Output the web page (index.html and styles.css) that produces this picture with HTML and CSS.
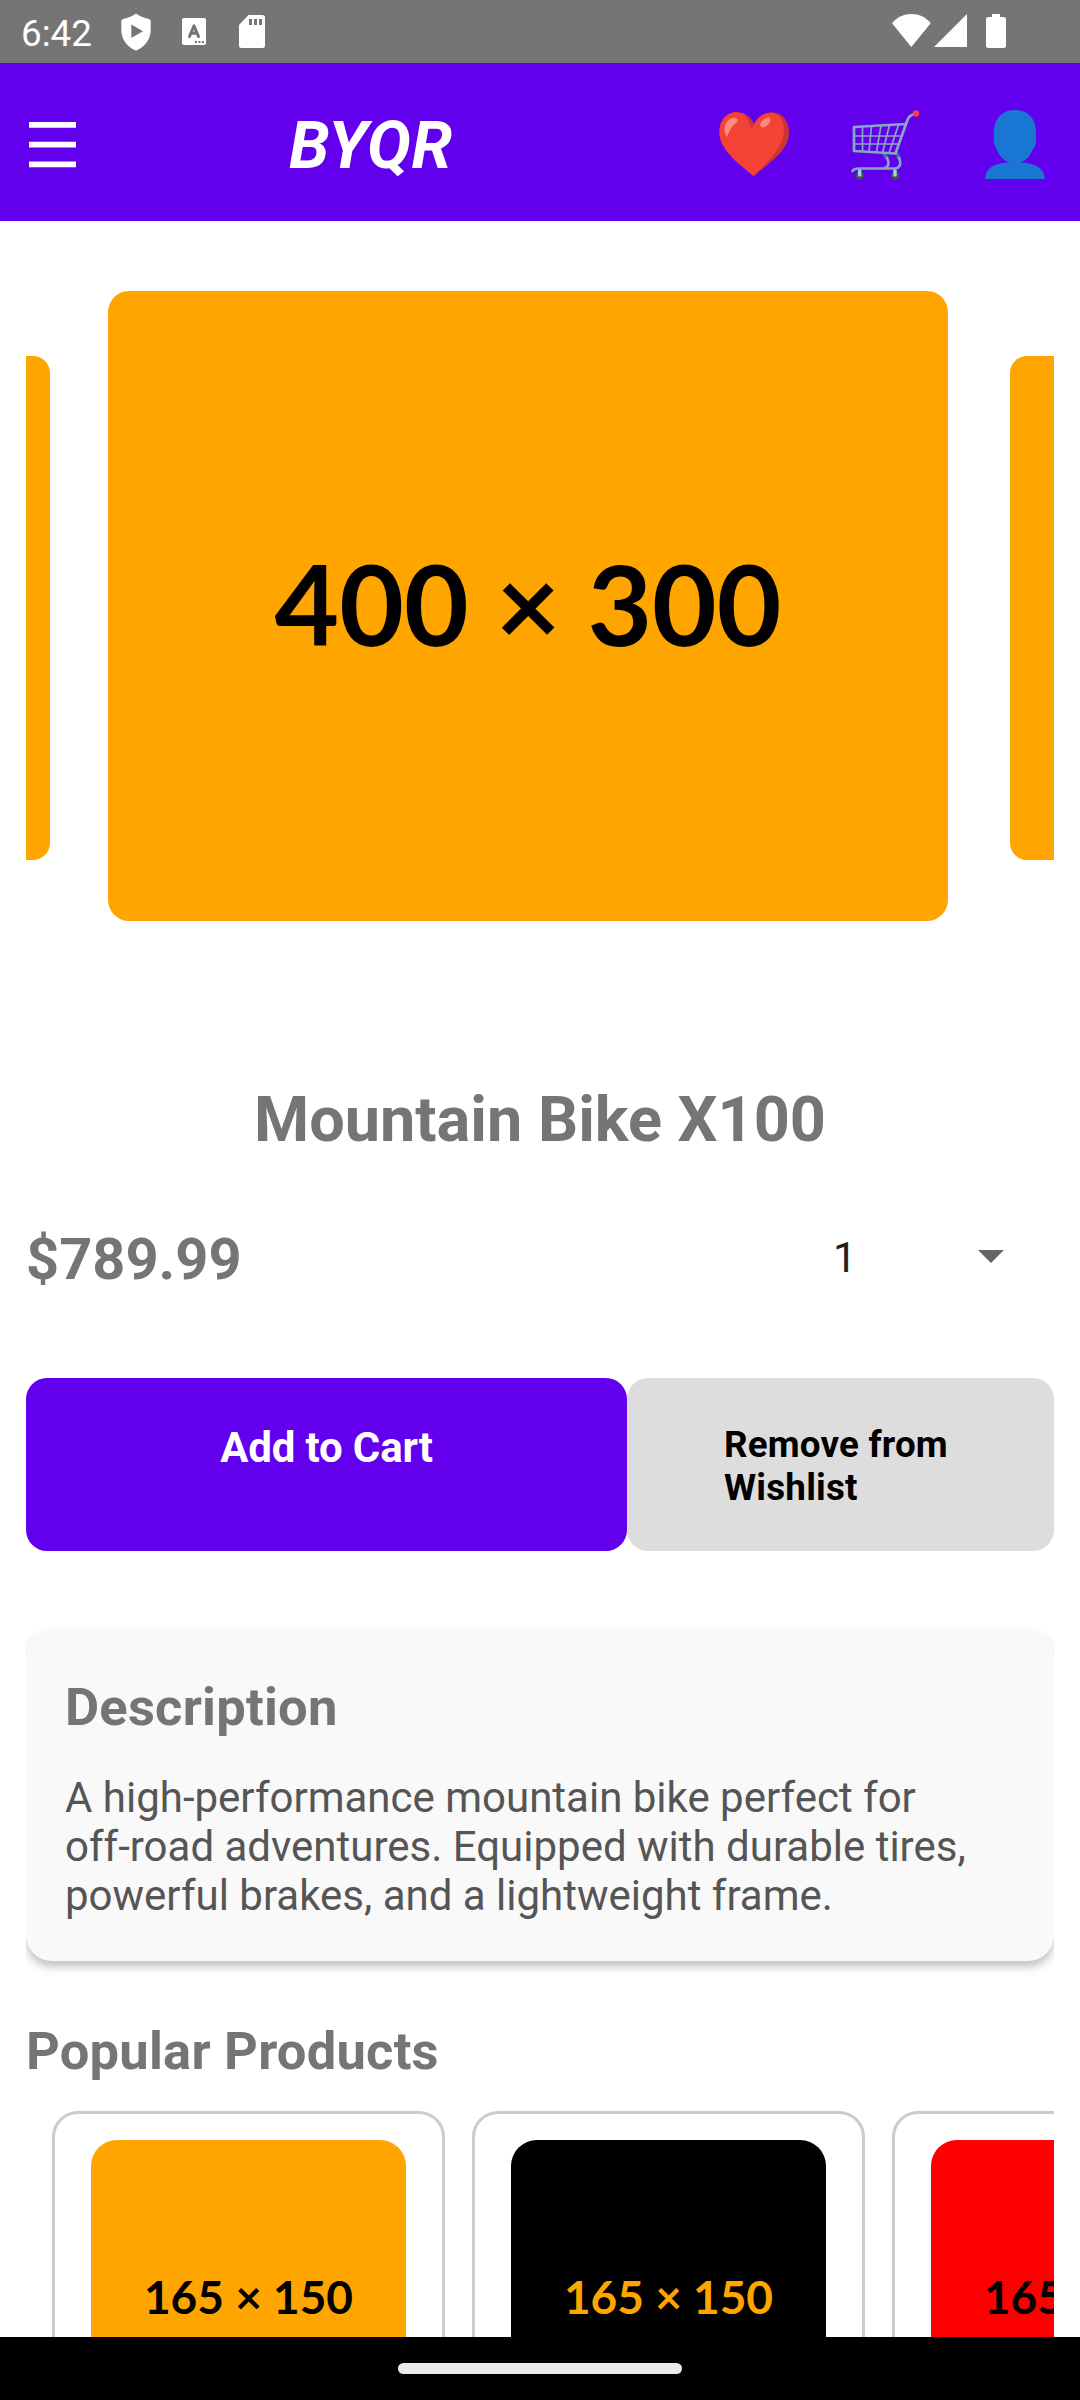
FILE: index.html
```html
<!DOCTYPE html>
<html lang="en">
<head>
<meta charset="utf-8">
<title>BYQR</title>
<link rel="stylesheet" href="styles.css">
</head>
<body>
<div class="screen">
  <div class="status">
    <span class="time">6:42</span>
    <svg class="shield" width="30" height="38" viewBox="0 0 30 38"><path fill="#fff" fill-rule="evenodd" d="M15 0.5C11.500 3.500 5.500 5 2 6Q0.300 6.700 0.300 8.500V17C0.300 27 7 34.500 15 37.500C23 34.500 29.700 27 29.700 17V8.500Q29.700 6.700 28 6C24.500 5 18.500 3.500 15 0.500ZM10.300 11.500V25L22 18.300Z"/></svg>
    <svg class="lang" width="24" height="27" viewBox="0 0 24 27"><rect width="24" height="27" rx="2" fill="#fff"/><path fill="none" stroke="#757575" stroke-width="3" stroke-linecap="round" stroke-linejoin="round" d="M7.500 18.500L12 7.800L16.500 18.500M9 15.300H15"/><path fill="#757575" d="M13 23h2v2h-2zM16.500 23h2v2h-2zM20 23h2v2h-2z"/></svg>
    <svg class="sd" width="26" height="33" viewBox="0 0 26 33"><path fill="#fff" fill-rule="evenodd" d="M9.500 0H23.500Q26 0 26 2.500V30.500Q26 33 23.500 33H2.500Q0 33 0 30.500V10ZM10 4V10H13V4ZM15 4V10H18V4ZM20 4V10H23V4Z"/></svg>
    <svg class="signals" width="115" height="34" viewBox="0 0 115 34"><g fill="#fff"><path d="M0 9.200C10 -3 29 -3 38.700 9.200L19.300 33Z"/><path d="M42 33L75 0V33Z"/><path d="M100 0h8v3h3.500q2.500 0 2.500 2.500v26q0 2.500-2.500 2.500h-15q-2.500 0-2.500-2.500v-26q0-2.500 2.500-2.500h3.500z"/></g></svg>
  </div>
  <header class="header">
    <svg class="menu" width="47" height="46" viewBox="0 0 47 46"><path fill="#fff" d="M0 0h47v5.700H0zM0 19.800h47v5.700H0zM0 39.500h47v5.700H0z"/></svg>
    <h1 class="brand">BYQR</h1>
    <svg class="heart" width="70" height="65" viewBox="0 0 70 65"><path fill="#c33" d="M35 17C40 3 48 0.300 53 0.300C63 0.300 70 9 70 20C70 39 51 50 35 64C28 57 0.500 40 0.500 20C0.500 8 8 0.300 17 0.300C26 0.300 32 5 35 17Z"/><path fill="#f44336" d="M35 12.500C38 5 44 1 51 0.800C60 1 65.500 8 65 19C64 38 44 54 34.500 64C26 56 0.300 40 0.300 20C0.300 8 8 0.300 17 0.300C24 0.300 31 3.500 35 12.500Z"/><path fill="#c33" d="M24 1.800C29 3 33 7 35 12.500L32.500 17C31 11 28.500 5 24 1.800Z"/><g fill="#ff8a80"><path d="M8 25C4 19 5 10 11 7C16 4 21 7 17 11C12 15 11 18 8 25Z"/><ellipse cx="46.300" cy="10.500" rx="6.200" ry="3.500" transform="rotate(-43 46.300 10.500)"/></g></svg>
    <svg class="cart" width="69" height="70" viewBox="0 0 69 70"><g fill="none" stroke="#84a8bf" stroke-linecap="round" stroke-linejoin="round"><path stroke="#317b91" stroke-width="3.500" d="M33 44L36 48M46 44L48 48"/><path stroke-width="2.700" d="M64 4C58 5 57 8 55 14L44.500 43.500L3 41V17L55 14M36 48C39 54 37 57 33 58.500M48 48C51 55 48 58 44 58.500H8Q3 58.500 1.500 61"/><path stroke-width="1.700" d="M4 26H50M4 34H47M11.500 17V41M20.500 16L18 42M30 15.500L25.500 42M38.500 15L31.500 43M47.500 15L38 43"/></g><circle cx="65" cy="3.500" r="3.200" fill="#f44336"/><g fill="#484f54"><circle cx="8.800" cy="65.500" r="4.200"/><circle cx="44" cy="65.500" r="4.200"/></g><g fill="#9bd8e4"><rect x="7" y="59.500" width="3.400" height="7" rx="1"/><rect x="42.300" y="59.500" width="3.400" height="7" rx="1"/></g></svg>
    <svg class="user" width="60" height="69" viewBox="0 0 60 69"><path fill="#1976d2" d="M30 0C43 0 51 8 51 23V30C51 36 48.500 39 47 41C45 47 40 51 35 52.300C50 53 59.500 59 59.500 67V69H0.300V67C0.300 59 9.500 53 24.700 52.300C19.500 51 15 47 12.500 41C11 38.500 8.800 35 8.800 29V23C9 8 17 0 30 0Z"/></svg>
  </header>
  <main class="content">
    <section class="carousel">
      <div class="slide side"></div>
      <div class="slide current">400 × 300</div>
      <div class="slide side"></div>
    </section>
    <h2 class="name">Mountain Bike X100</h2>
    <div class="buyline">
      <span class="price">$789.99</span>
      <span class="qty">1</span>
      <svg class="caret" width="26" height="13" viewBox="0 0 26 13"><path fill="#666" d="M0 0H26L13 13Z"/></svg>
    </div>
    <div class="actions">
      <div class="btn add">Add to Cart</div>
      <div class="btn remove">Remove from<br>Wishlist</div>
    </div>
    <section class="card">
      <h3 class="heading">Description</h3>
      <p class="copy">A high-performance mountain bike perfect for<br>off-road adventures. Equipped with durable tires,<br>powerful brakes, and a lightweight frame.</p>
    </section>
    <h3 class="heading popular">Popular Products</h3>
    <div class="products">
      <article class="product"><div class="thumb orange">165 × 150</div></article>
      <article class="product"><div class="thumb black">165 × 150</div></article>
      <article class="product"><div class="thumb red">165 × 150</div></article>
    </div>
  </main>
  <div class="navbar"><div class="pill"></div></div>
</div>
</body>
</html>
```
FILE: styles.css
```css
* { box-sizing: border-box; margin: 0; padding: 0; }
body { background: #fff; font-family: Roboto, sans-serif; color: #757575; }
svg { display: block; flex: none; }
.screen { width: 1080px; height: 2400px; display: flex; flex-direction: column; overflow: hidden; }

.status { height: 63px; flex: none; background: #757575; color: #fff; display: flex; align-items: flex-start; padding-left: 21px; }
.time { width: 100px; font-size: 36.75px; line-height: 43px; padding-top: 12px; }
.shield { margin-top: 13px; }
.lang { margin: 18px 0 0 31px; }
.sd { margin: 15px 0 0 33px; }
.signals { margin: 14px 73px 0 auto; }

.header { height: 158px; flex: none; background: #6200ee; color: #fff; display: flex; align-items: flex-start; padding-left: 29px; }
.menu { margin-top: 59px; }
.brand { width: 430px; margin: 44px 0 0 213px; font-size: 65.6px; line-height: 77px; font-style: italic; font-weight: 700; letter-spacing: .4px; }
.heart { margin: 49px 0 0 0; }
.cart { margin: 47px 0 0 62px; }
.user { margin: 47px 0 0 65px; }

.content { flex: 1; min-height: 0; width: 1028px; margin: 0 auto; overflow: hidden; }
.carousel { display: flex; align-items: center; justify-content: center; height: 630px; margin: 70px 0 162px; padding-right: 20px; }
.slide { flex: none; background: #ffa500; color: #000; display: flex; align-items: center; justify-content: center; font-family: Lato, sans-serif; font-weight: 700; white-space: pre; }
.current { width: 840px; height: 630px; border-radius: 21px; font-size: 111.5px; margin: 0 62px 0 58px; padding-bottom: 7px; }
.side { width: 672px; height: 504px; border-radius: 17px; margin-top: 4px; }
.name { font-size: 63px; line-height: 74px; text-align: center; font-weight: 700; }
.buyline { display: flex; align-items: flex-start; height: 68px; margin: 68px 0 85px; }
.price { width: 807px; font-size: 57.75px; line-height: 68px; font-weight: 700; }
.qty { width: 145px; font-size: 42px; line-height: 50px; padding-top: 8px; color: #212121; }
.caret { margin-top: 25px; }

.actions { display: flex; height: 173px; }
.btn { border-radius: 21px; font-weight: 700; padding-top: 45px; }
.add { width: 601px; background: #6200ee; color: #fff; font-size: 42px; line-height: 50px; text-align: center; letter-spacing: -.15px; }
.remove { width: 427px; background: #ddd; color: #000; font-size: 36.75px; line-height: 43px; padding-left: 97px; letter-spacing: .2px; }

.card { height: 332px; margin-top: 78px; padding: 47px 39px 0; background: #f9f9f9; border-radius: 26px; box-shadow: 0 6px 8px rgba(0, 0, 0, .24); }
.heading { font-size: 52.5px; line-height: 62px; font-weight: 700; letter-spacing: .22px; }
.copy { margin-top: 35px; font-size: 42px; line-height: 49px; color: #555; white-space: nowrap; }
.popular { margin: 59px 0 29px; }
.products { display: flex; gap: 27px; padding-left: 26px; }
.product { flex: none; width: 393px; height: 520px; border: 3px solid #ccc; border-radius: 26px; padding: 26px 36px; }
.thumb { width: 315px; height: 315px; border-radius: 26px; display: flex; align-items: center; justify-content: center; padding-bottom: 2px; font: 700 46px Lato, sans-serif; white-space: pre; }
.orange { background: #ffa500; color: #000; }
.black { background: #000; color: #ffa500; }
.red { background: #f00; color: #000; }

.navbar { height: 63px; flex: none; background: #000; display: flex; justify-content: center; padding-top: 26px; }
.pill { width: 284px; height: 11px; border-radius: 5.5px; background: #ebebeb; }
```
